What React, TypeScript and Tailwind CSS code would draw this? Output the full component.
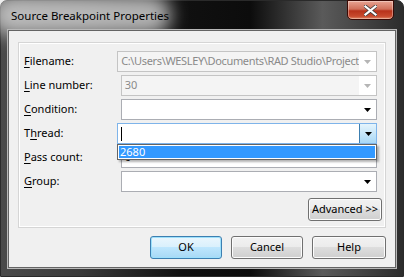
import React from "react";

const font = { fontFamily: '"Noto Sans", "Liberation Sans", sans-serif' };

function Arrow({ color = "#000" }: { color?: string }) {
  return (
    <svg width="7" height="4" viewBox="0 0 7 4">
      <path d="M0 0H7L3.5 4Z" fill={color} />
    </svg>
  );
}

function Combo({
  text,
  disabled,
  children,
  active,
  tight,
}: {
  text?: string;
  disabled?: boolean;
  children?: React.ReactNode;
  active?: boolean;
  tight?: boolean;
}) {
  return (
    <div
      className={`relative flex h-[21px] w-[260px] items-stretch border ${
        active ? "border-[#7eb4ea]" : disabled ? "border-[#c4c4c4]" : "border-[#abadb3]"
      } ${disabled ? "bg-[#f4f4f4]" : "bg-white"}`}
    >
      <div
        className={`flex flex-1 items-center overflow-hidden whitespace-nowrap pl-[3px] text-[11px] ${
          disabled ? "text-[#8a8a8a]" : "text-black"
        } ${tight ? "tracking-[-0.35px]" : ""}`}
      >
        {text}
        {children}
      </div>
      {active ? (
        <div className="flex w-[17px] items-center justify-center border-l border-[#3c7fb1] bg-gradient-to-b from-[#e5f4fc] to-[#a8d8f6]">
          <Arrow />
        </div>
      ) : (
        <div className="flex w-[17px] items-center justify-center bg-white">
          <Arrow color={disabled ? "#b5b5b5" : "#000"} />
        </div>
      )}
    </div>
  );
}

function Row({
  u,
  rest,
  pre,
  children,
}: {
  u: string;
  rest: string;
  pre?: string;
  children: React.ReactNode;
}) {
  return (
    <div className="flex h-[21px] items-center">
      <div className="w-[98px] whitespace-nowrap text-[11px] text-black">
        {pre}
        <span className="underline underline-offset-[2px]">{u}</span>
        {rest}
      </div>
      {children}
    </div>
  );
}

function Btn({ label, def, w = 72 }: { label: string; def?: boolean; w?: number }) {
  return (
    <div
      style={{ width: w }}
      className={`flex h-[23px] items-center justify-center whitespace-nowrap rounded-[3px] border text-[11px] text-black ${
        def
          ? "border-[#3c7fb1] bg-[linear-gradient(#eaf6fd_0%,#d9f0fc_50%,#bee6fd_50%,#a7d9f5_100%)] shadow-[inset_0_0_0_1px_#9de0fb]"
          : "border-[#707070] bg-[linear-gradient(#f2f2f2_0%,#ebebeb_50%,#dddddd_50%,#cfcfcf_100%)] shadow-[inset_0_0_0_1px_#fcfcfc]"
      }`}
    >
      {label}
    </div>
  );
}

export default function App() {
  return (
    <div style={font} className="relative h-[277px] w-[404px] overflow-hidden bg-[#fff]">
      <div className="absolute inset-0 rounded-t-[7px] border border-[#2a2a2a] bg-[linear-gradient(90deg,#4a4a4a_0%,#3a3a3a_20%,#101010_45%,#0c0c0c_62%,#5a5a5a_80%,#2c2c2c_100%)]">
        {/* title glow */}
        <div className="absolute left-[-10px] top-[-6px] h-[40px] w-[180px] rounded-full bg-[#d8d8d8] opacity-80 blur-[9px]" />
        <div className="relative flex h-[29px] items-center pl-[10px] text-[11.5px] text-black">
          Source Breakpoint Properties
        </div>
        {/* close button */}
        <div className="absolute right-[9px] top-[-1px] flex h-[20px] w-[47px] items-center justify-center rounded-b-[5px] border border-[#3a0a05] bg-[linear-gradient(#e8a493_0%,#d0705a_45%,#b8321b_55%,#c84a2e_85%,#e08a68_100%)] shadow-[inset_0_0_0_1px_rgba(255,255,255,0.35)]">
          <svg width="13" height="11" viewBox="0 0 13 11">
            <path d="M1 1L12 10M12 1L1 10" stroke="#3b3b3b" strokeWidth="3.6" strokeLinecap="square" />
            <path d="M1.5 1.5L11.5 9.5M11.5 1.5L1.5 9.5" stroke="#fff" strokeWidth="2.2" strokeLinecap="square" />
          </svg>
        </div>
        {/* client */}
        <div className="absolute bottom-[8px] left-[7px] right-[7px] top-[29px] border border-[#646464] bg-[#f0f0f0] shadow-[0_0_0_1px_#b8b8b8]">
          <div className="flex flex-col px-[9px] pt-[11px]">
            <div className="flex h-[186px] flex-col border border-[#d5d5d5] pl-[5px] pr-[8px] pt-[8px] shadow-[inset_0_0_0_1px_#fff]">
              <div className="flex flex-col gap-[3px]">
                <Row u="F" rest="ilename:">
                  <Combo text="C:\Users\WESLEY\Documents\RAD Studio\Project" disabled tight />
                </Row>
                <Row u="L" rest="ine number:">
                  <Combo text="30" disabled />
                </Row>
                <Row u="C" rest="ondition:">
                  <Combo />
                </Row>
                <Row pre="T" u="h" rest="read:">
                  <div className="relative">
                    <Combo active>
                      <span className="inline-block h-[14px] w-[1px] bg-black" />
                    </Combo>
                    <div className="absolute left-0 top-[21px] z-10 h-[16px] w-[260px] border border-[#646464] bg-white p-[1px] shadow-[2px_2px_2px_rgba(0,0,0,0.3)]">
                      <div className="flex h-full items-center bg-[#3399ff] pl-[1px] text-[11px] text-white">
                        2680
                      </div>
                    </div>
                  </div>
                </Row>
                <Row u="P" rest="ass count:">
                  <Combo text="0" />
                </Row>
                <Row u="G" rest="roup:">
                  <Combo />
                </Row>
              </div>
              <div className="mt-[6px] flex w-[358px] justify-end">
                <Btn label="Advanced >>" w={74} />
              </div>
            </div>
            <div className="mt-[8px] flex justify-end gap-[9px]">
              <Btn label="OK" def />
              <Btn label="Cancel" />
              <Btn label="Help" w={74} />
            </div>
          </div>
        </div>
      </div>
    </div>
  );
}
